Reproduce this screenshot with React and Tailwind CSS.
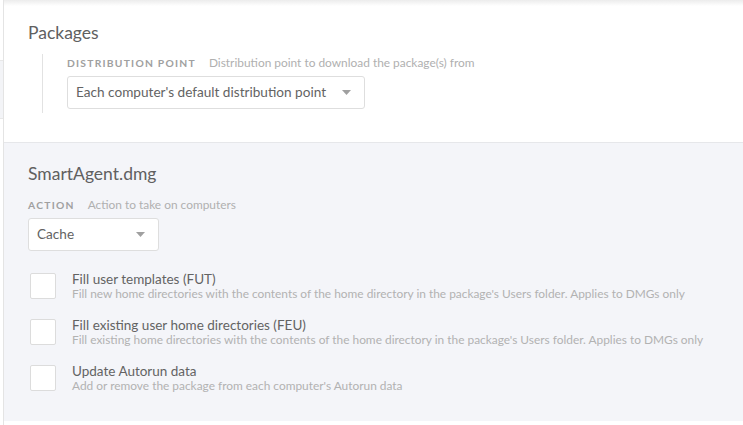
import React from 'react'

const FONT = { fontFamily: 'Lato, "Open Sans", "Liberation Sans", sans-serif' }

const Caret = () => (
    <svg width="9" height="5" viewBox="0 0 9 5" className="shrink-0">
        <path d="M0 0 L9 0 L4.5 5 Z" fill="#a0a0a0" />
    </svg>
)

const Select = ({ value, width }) => (
    <div className={`flex items-center justify-between h-[33px] ${width} pl-2 pr-[13px] bg-white border border-[#dedede] rounded-[3px] text-[13.6px] text-[#636363]`}>
        <span>{value}</span>
        <Caret />
    </div>
)

const Label = ({ title, desc }) => (
    <div className="flex items-baseline gap-[13px] h-[16px]">
        <span className="text-[10.3px] font-bold tracking-[0.12em] text-[#a0a0a0]">{title}</span>
        <span className="text-[11.9px] text-[#b0b0b0]">{desc}</span>
    </div>
)

const CheckRow = ({ title, desc }) => (
    <div className="flex items-start gap-4">
        <div className="mt-[2px] ml-[2px] w-[26px] h-[26px] shrink-0 bg-white border border-[#dcdcdc] rounded-[2px]" />
        <div className="flex flex-col">
            <span className="text-[13.5px] leading-[16px] text-[#636363]">{title}</span>
            <span className="text-[11.9px] leading-[14px] text-[#b2b2b2]">{desc}</span>
        </div>
    </div>
)

export default function App() {
    return (
        <div className="w-[743px] h-[425px] flex bg-white overflow-hidden" style={FONT}>
            {/* sliver of the page behind */}
            <div className="w-[3px] flex flex-col">
                <div className="h-[60px] bg-white" />
                <div className="h-[59px] bg-[#f3f4f7] border-y border-[#e8e8e8]" />
                <div className="flex-1 bg-white" />
            </div>
            <div className="flex-1 flex flex-col border-l border-[#e4e4e4] relative">
                <div className="absolute top-0 left-0 right-0 h-[6px] bg-gradient-to-b from-[#ececec] to-white" />
                <section className="h-[143px] bg-white border-b border-[#e6e7ea] pl-6 pt-[23px]">
                    <h2 className="text-[17.5px] leading-[20px] text-[#606060]">Packages</h2>
                    <div className="mt-[11px] ml-[14px] border-l border-[#e2e2e2] pl-6 pb-[4px]">
                        <Label title="DISTRIBUTION POINT" desc="Distribution point to download the package(s) from" />
                        <div className="mt-[6px]">
                            <Select value="Each computer's default distribution point" width="w-[298px]" />
                        </div>
                    </div>
                </section>
                <section className="flex-1 bg-[#f4f5f9] pl-6 pt-[21px]">
                    <h2 className="text-[17.5px] leading-[20px] text-[#606060]">SmartAgent.dmg</h2>
                    <div className="mt-[12px]">
                        <Label title="ACTION" desc="Action to take on computers" />
                    </div>
                    <div className="mt-[6px]">
                        <Select value="Cache" width="w-[131px]" />
                    </div>
                    <div className="mt-[20px] flex flex-col gap-4">
                        <CheckRow title="Fill user templates (FUT)" desc="Fill new home directories with the contents of the home directory in the package's Users folder. Applies to DMGs only" />
                        <CheckRow title="Fill existing user home directories (FEU)" desc="Fill existing home directories with the contents of the home directory in the package's Users folder. Applies to DMGs only" />
                        <CheckRow title="Update Autorun data" desc="Add or remove the package from each computer's Autorun data" />
                    </div>
                </section>
                <div className="h-[4px] bg-white" />
            </div>
        </div>
    )
}
